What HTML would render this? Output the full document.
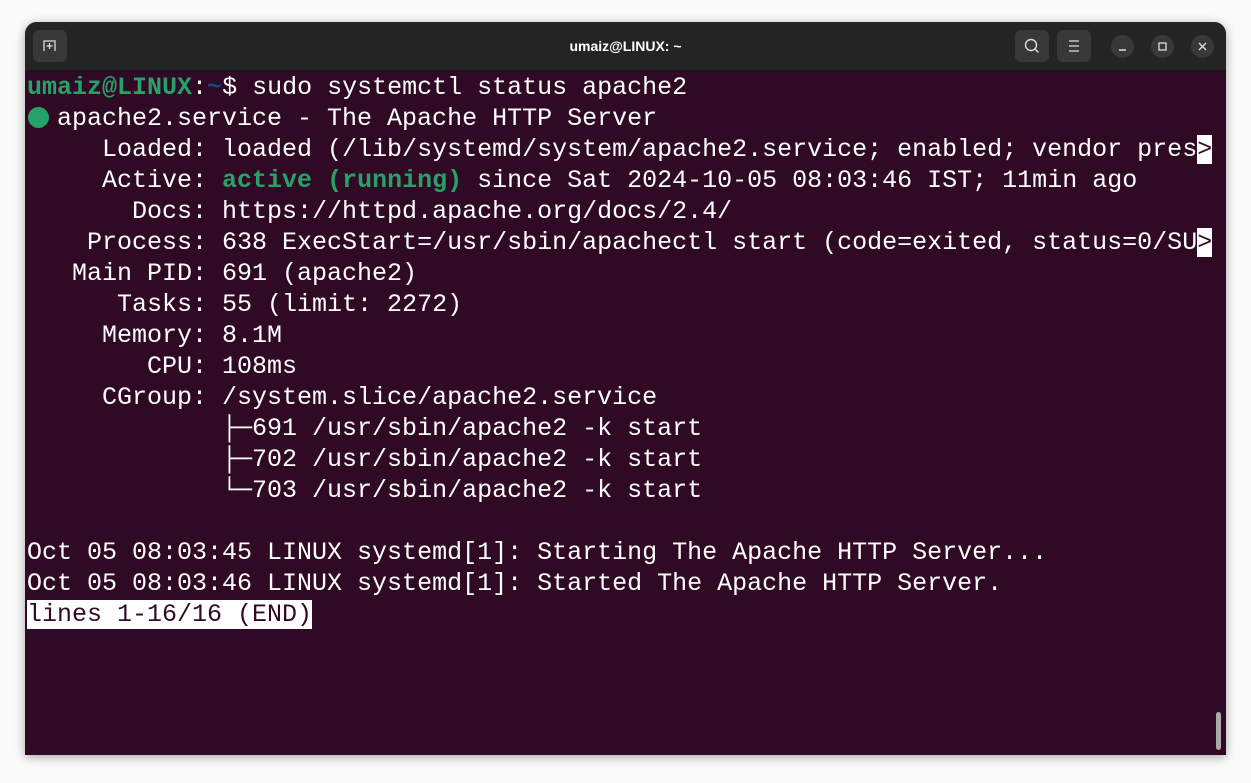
<!DOCTYPE html>
<html><head><style>
html,body{margin:0;padding:0;width:1251px;height:783px;background:#fafafa;overflow:hidden}
.win{position:absolute;left:25px;top:22px;width:1201px;height:733px;border-radius:12px 12px 0 0;overflow:hidden;box-shadow:0 2px 10px rgba(0,0,0,.35);background:#300a24}
.tb{position:absolute;left:0;top:0;width:100%;height:48px;background:#242424;border-bottom:1px solid #1a1a1a}
.title{position:absolute;left:0;right:0;top:0;height:48px;text-align:center;color:#fff;font-family:"Liberation Sans",sans-serif;font-weight:bold;font-size:14px;line-height:48px}
.btn{position:absolute;top:8px;width:34px;height:32px;background:#383838;border-radius:6px}
.cb{position:absolute;top:13px;width:23px;height:23px;background:#383838;border-radius:50%}
pre{position:absolute;left:2px;top:50px;margin:0;font:25px/31px "Liberation Mono","DejaVu Sans Mono",monospace;color:#fff;white-space:pre}
.g{color:#26a269;font-weight:bold}.b{color:#12488b;font-weight:bold}
.inv{background:#fff;color:#300a24}
.dot{display:inline-block;width:30px;height:20px;vertical-align:-2px;position:relative}
.dot:before{content:"";position:absolute;left:1px;top:0;width:21px;height:21px;border-radius:50%;background:#26a269}
.sb{position:absolute;left:1191px;top:690px;width:5px;height:38px;background:#aaa;border-radius:3px}
</style></head><body>
<div class="win">
<div class="tb">
<div class="btn" style="left:8px"><svg width="34" height="32"><path d="M11 21V11h11v10M13.5 16h6M16.5 13v6" stroke="#ddd" stroke-width="1.3" fill="none"/></svg></div>
<div class="title">umaiz@LINUX: ~</div>
<div class="btn" style="left:990px"><svg width="34" height="32"><circle cx="16" cy="15" r="5.5" stroke="#ddd" stroke-width="1.4" fill="none"/><path d="M20 19l3.5 3.5" stroke="#ddd" stroke-width="1.4"/></svg></div>
<div class="btn" style="left:1032px"><svg width="34" height="32"><path d="M12 11h10M12 16h10M12 21h10" stroke="#ddd" stroke-width="1.3"/></svg></div>
<div class="cb" style="left:1086px"><svg width="23" height="23"><path d="M8 15h7" stroke="#ddd" stroke-width="1.4"/></svg></div>
<div class="cb" style="left:1126px"><svg width="23" height="23"><rect x="8" y="8" width="7" height="7" stroke="#ddd" stroke-width="1.3" fill="none"/></svg></div>
<div class="cb" style="left:1166px"><svg width="23" height="23"><path d="M8 8l7 7M15 8l-7 7" stroke="#ddd" stroke-width="1.4"/></svg></div>
</div>
<pre><span class="g">umaiz@LINUX</span>:<span class="b">~</span>$ sudo systemctl status apache2
<span class="dot"></span>apache2.service - The Apache HTTP Server
     Loaded: loaded (/lib/systemd/system/apache2.service; enabled; vendor pres<span class="inv">&gt;</span>
     Active: <span class="g">active (running)</span> since Sat 2024-10-05 08:03:46 IST; 11min ago
       Docs: https://httpd.apache.org/docs/2.4/
    Process: 638 ExecStart=/usr/sbin/apachectl start (code=exited, status=0/SU<span class="inv">&gt;</span>
   Main PID: 691 (apache2)
      Tasks: 55 (limit: 2272)
     Memory: 8.1M
        CPU: 108ms
     CGroup: /system.slice/apache2.service
             ├─691 /usr/sbin/apache2 -k start
             ├─702 /usr/sbin/apache2 -k start
             └─703 /usr/sbin/apache2 -k start

Oct 05 08:03:45 LINUX systemd[1]: Starting The Apache HTTP Server...
Oct 05 08:03:46 LINUX systemd[1]: Started The Apache HTTP Server.
<span class="inv">lines 1-16/16 (END)</span></pre>
<div class="sb"></div>
</div>
</body></html>
